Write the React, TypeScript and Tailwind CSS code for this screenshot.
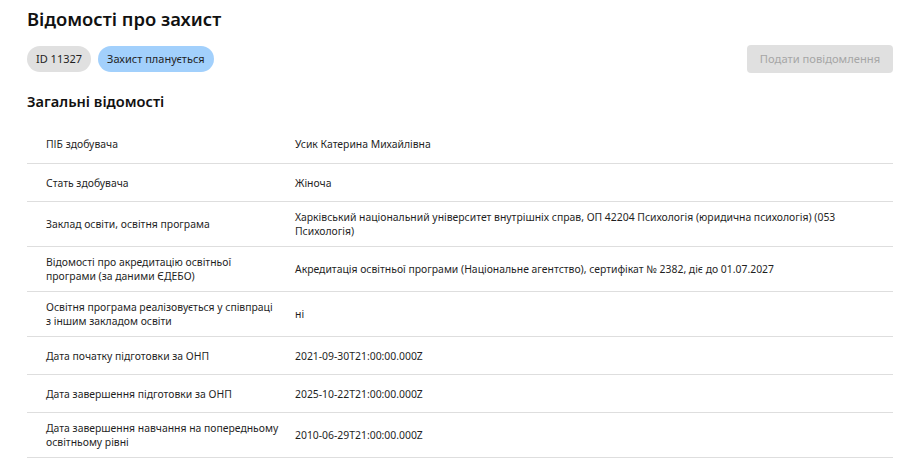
import React from "react";

const rows: [string, string][] = [
  ["ПІБ здобувача", "Усик Катерина Михайлівна"],
  ["Стать здобувача", "Жіноча"],
  [
    "Заклад освіти, освітня програма",
    "Харківський національний університет внутрішніх справ, ОП 42204 Психологія (юридична психологія) (053 Психологія)",
  ],
  [
    "Відомості про акредитацію освітньої програми (за даними ЄДЕБО)",
    "Акредитація освітньої програми (Національне агентство), сертифікат № 2382, діє до 01.07.2027",
  ],
  ["Освітня програма реалізовується у співпраці з іншим закладом освіти", "ні"],
  ["Дата початку підготовки за ОНП", "2021-09-30T21:00:00.000Z"],
  ["Дата завершення підготовки за ОНП", "2025-10-22T21:00:00.000Z"],
  ["Дата завершення навчання на попередньому освітньому рівні", "2010-06-29T21:00:00.000Z"],
];

export default function App() {
  return (
    <div
      className="w-[920px] h-[464px] overflow-hidden bg-white text-[#1f1f1f] px-[27px] pt-[5px]"
      style={{ fontFamily: '"Noto Sans", "Open Sans", sans-serif' }}
    >
      <h1 className="text-[18.4px] leading-[28px] font-semibold text-[#111]">Відомості про захист</h1>
      <div className="flex items-center justify-between mt-[12px]">
        <div className="flex items-center gap-[7px]">
          <span className="h-[26px] px-[9px] rounded-full bg-[#e0e0e0] text-[11px] flex items-center">ID 11327</span>
          <span className="h-[26px] px-[9px] rounded-full bg-[#a2d0fc] text-[11px] flex items-center">Захист планується</span>
        </div>
        <button className="h-[28px] w-[146px] rounded-[4px] bg-[#e0e0e0] text-[#a6a6a6] text-[11.2px]">
          Подати повідомлення
        </button>
      </div>
      <h2 className="text-[14.6px] leading-[20px] font-semibold text-[#111] mt-[18px]">Загальні відомості</h2>
      <div className="mt-[14px]">
        {rows.map(([k, v], i) => (
          <div
            key={i}
            className={`grid grid-cols-[258px_1fr] items-center min-h-[38px] text-[10.4px] leading-[14px] ${
              i === 0 ? "" : "border-t border-[#dedede]"
            } ${i === rows.length - 1 ? "border-b border-[#dedede]" : ""}`}
          >
            <div className="pl-[19px] pr-[6px] py-[8px]">{k}</div>
            <div className="px-[10px] py-[8px]">{v}</div>
          </div>
        ))}
      </div>
    </div>
  );
}
